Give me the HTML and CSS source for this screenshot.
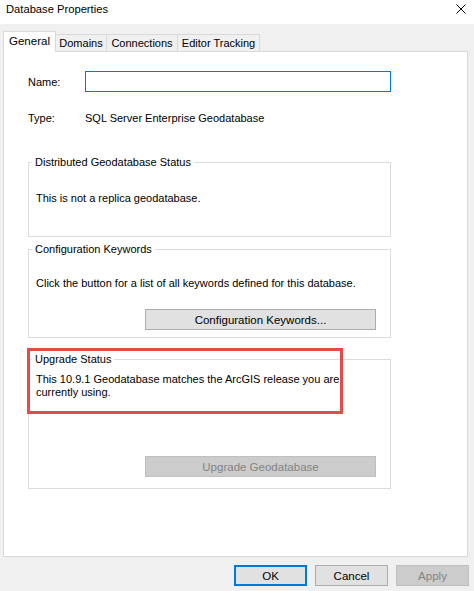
FILE: index.html
```html
<!DOCTYPE html>
<html>
<head>
<meta charset="utf-8">
<title>Database Properties</title>
<link rel="stylesheet" href="styles.css">
</head>
<body>
<div class="titlebar">
  <span class="title">Database Properties</span>
  <svg class="close" width="10" height="10" viewBox="0 0 10 10"><path d="M0.5 0.5L9.5 9.5M9.5 0.5L0.5 9.5" stroke="#000" stroke-width="1" fill="none"/></svg>
</div>
<div class="dialog">
  <div class="tabs">
    <div class="tab tab-general selected">General</div>
    <div class="tab tab-domains">Domains</div>
    <div class="tab tab-connections">Connections</div>
    <div class="tab tab-editor">Editor Tracking</div>
  </div>
  <div class="panel">
    <div class="field-row">
      <span class="label">Name:</span>
      <input class="name-input" type="text">
    </div>
    <div class="field-row type-row">
      <span class="label">Type:</span>
      <span>SQL Server Enterprise Geodatabase</span>
    </div>
    <div class="group group-dist">
      <div class="group-title">Distributed Geodatabase Status</div>
      <p class="group-text text-dist">This is not a replica geodatabase.</p>
    </div>
    <div class="group group-config">
      <div class="group-title">Configuration Keywords</div>
      <p class="group-text text-config">Click the button for a list of all keywords defined for this database.</p>
      <button class="btn group-btn">Configuration Keywords...</button>
    </div>
    <div class="group group-upgrade">
      <div class="group-title">Upgrade Status</div>
      <p class="group-text text-upgrade">This 10.9.1 Geodatabase matches the ArcGIS release you are<br>currently using.</p>
      <button class="btn group-btn btn-disabled">Upgrade Geodatabase</button>
      <div class="highlight"></div>
    </div>
  </div>
  <div class="footer">
    <button class="btn btn-default">OK</button>
    <button class="btn">Cancel</button>
    <button class="btn btn-disabled">Apply</button>
  </div>
</div>
</body>
</html>
```
FILE: styles.css
```css
html, body {
  margin: 0;
  padding: 0;
}
body {
  background: #f0f0f0;
  font-family: "Liberation Sans", Arial, sans-serif;
  font-size: 11px;
  color: #000;
  width: 474px;
  height: 591px;
  overflow: hidden;
}
.titlebar {
  box-sizing: border-box;
  height: 24px;
  background: #fff;
  display: flex;
  align-items: flex-start;
  justify-content: space-between;
  padding: 0 8px 0 6px;
}
.title {
  line-height: 14px;
  margin-top: 2px;
  font-size: 11.2px;
}
.close {
  margin-top: 4px;
  display: block;
}
.dialog {
  padding: 7px 6px 0 3px;
}
.tabs {
  display: flex;
  align-items: flex-end;
  height: 20px;
}
.tab {
  box-sizing: border-box;
  height: 17px;
  border: 1px solid #d9d9d9;
  border-bottom: none;
  margin-left: -1px;
  text-align: center;
  line-height: 16px;
  background: #f0f0f0;
  white-space: nowrap;
}
.tab.selected {
  height: 21px;
  margin-left: 0;
  margin-bottom: -1px;
  background: #fff;
  line-height: 18px;
  font-size: 11.5px;
  position: relative;
  z-index: 1;
}
.tab-general { width: 53px; }
.tab-domains { width: 52px; }
.tab-connections { width: 72px; }
.tab-editor { width: 83px; }
.panel {
  box-sizing: border-box;
  height: 506px;
  border: 1px solid #d9d9d9;
  background: #fff;
  padding: 19px 0 0 24px;
}
.field-row {
  display: grid;
  grid-template-columns: 57px 306px;
  align-items: center;
}
.name-input {
  box-sizing: border-box;
  height: 21px;
  width: 306px;
  border: 1px solid #0078d7;
  margin: 0;
  padding: 0 3px;
  font: inherit;
  outline: none;
  background: #fff;
}
.type-row {
  margin-top: 19px;
  line-height: 14px;
}
.group {
  box-sizing: border-box;
  width: 363px;
  border: 1px solid #dcdcdc;
  display: flex;
  flex-direction: column;
  align-items: flex-start;
  padding: 0 0 0 7px;
}
.group-title {
  margin: -8px 0 0 -4px;
  padding: 0 3px;
  background: #fff;
  line-height: 14px;
  white-space: nowrap;
}
.group-text {
  margin: 0;
  line-height: 14px;
  white-space: nowrap;
}
.group-dist {
  margin-top: 37px;
  height: 75px;
}
.text-dist {
  margin-top: 22px;
}
.group-config {
  margin-top: 12px;
  height: 89px;
  padding-bottom: 7px;
}
.text-config {
  margin-top: 20px;
}
.group-upgrade {
  margin-top: 21px;
  height: 130px;
  padding-bottom: 11px;
  position: relative;
}
.text-upgrade {
  margin-top: 7px;
  line-height: 13px;
}
.btn {
  box-sizing: border-box;
  width: 73px;
  height: 21px;
  border: 1px solid #adadad;
  background: #e1e1e1;
  font: inherit;
  font-size: 11.5px;
  color: #000;
  padding: 0;
  margin: 0;
}
.group-btn {
  width: 231px;
  margin-top: auto;
  align-self: flex-end;
  margin-right: 14px;
}
.btn-default {
  border: 2px solid #0078d7;
}
.btn-disabled {
  background: #cccccc;
  border-color: #bfbfbf;
  color: #838383;
}
.highlight {
  position: absolute;
  left: -2px;
  top: -12px;
  width: 316px;
  height: 66px;
  box-sizing: border-box;
  border: 3px solid #e84848;
  pointer-events: none;
}
.footer {
  display: flex;
  justify-content: flex-end;
  gap: 8px;
  margin-top: 8px;
  margin-right: -1px;
}
```
